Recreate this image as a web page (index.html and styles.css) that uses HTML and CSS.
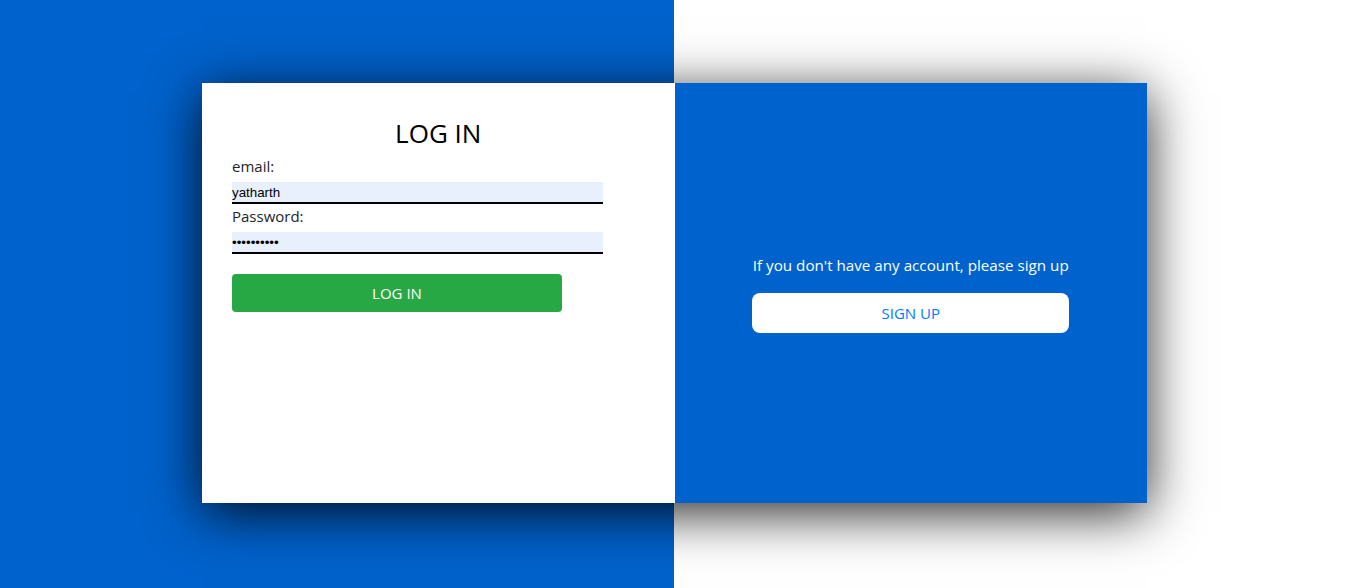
FILE: index.html
```html
<!DOCTYPE html>
<html lang="en">
<head>
<meta charset="utf-8">
<title>Log in</title>
<link rel="stylesheet" href="styles.css">
</head>
<body>
<div class="page">
  <div class="card">
    <div class="login">
      <h2 class="title">LOG IN</h2>
      <label class="label" for="email">email:</label>
      <input class="field" id="email" type="text" value="yatharth">
      <label class="label" for="pw">Password:</label>
      <input class="field" id="pw" type="password" value="yatharth12">
      <button class="btn-login" type="button">LOG IN</button>
    </div>
    <div class="signup">
      <p class="signup-text">If you don't have any account, please sign up</p>
      <button class="btn-signup" type="button">SIGN UP</button>
    </div>
  </div>
</div>
</body>
</html>
```
FILE: styles.css
```css
html, body {
  margin: 0;
  padding: 0;
}
body {
  font-family: "Open Sans", "Noto Sans", sans-serif;
  background: linear-gradient(to right, #0062cc 50%, #ffffff 50%);
  height: 588px;
  overflow: hidden;
}
.page {
  padding-top: 83px;
}
.card {
  width: 945px;
  height: 420px;
  margin: 0 auto;
  display: flex;
  box-shadow: 0 10px 50px rgba(0, 0, 0, 0.85);
}
.login {
  width: 50%;
  background: #ffffff;
  padding: 35px 30px 0;
  box-sizing: border-box;
  display: flex;
  flex-direction: column;
  align-items: flex-start;
}
.title {
  align-self: stretch;
  text-align: center;
  font-weight: 400;
  font-size: 26px;
  line-height: 31px;
  margin: 0 0 5px;
  color: #000;
}
.label {
  display: block;
  font-size: 15px;
  line-height: 20px;
  padding-top: 2px;
  margin-bottom: 6px;
  color: #212529;
}
.field {
  width: 90%;
  height: 22px;
  box-sizing: border-box;
  margin: 0;
  padding: 0;
  border: none;
  border-bottom: 2px solid #000;
  background: #e8f0fe;
  font-family: "Liberation Sans", Arial, sans-serif;
  font-size: 13.33px;
  color: #000;
  outline: none;
}
.btn-login {
  margin-top: 20px;
  width: 80%;
  height: 38px;
  border: none;
  border-radius: 4px;
  background: #28a745;
  color: #fff;
  font-family: "Open Sans", "Noto Sans", sans-serif;
  font-size: 15px;
  padding: 0;
}
.signup {
  width: 50%;
  background: #0062cc;
  padding-top: 2px;
  box-sizing: border-box;
  display: flex;
  flex-direction: column;
  align-items: center;
  justify-content: center;
}
.signup-text {
  margin: 0 0 18px;
  color: #fff;
  font-size: 15.2px;
  line-height: 20px;
}
.btn-signup {
  width: 317px;
  height: 40px;
  border: none;
  border-radius: 8px;
  background: #fff;
  color: #007bff;
  font-family: "Open Sans", "Noto Sans", sans-serif;
  font-size: 15px;
  padding: 0;
}
```
